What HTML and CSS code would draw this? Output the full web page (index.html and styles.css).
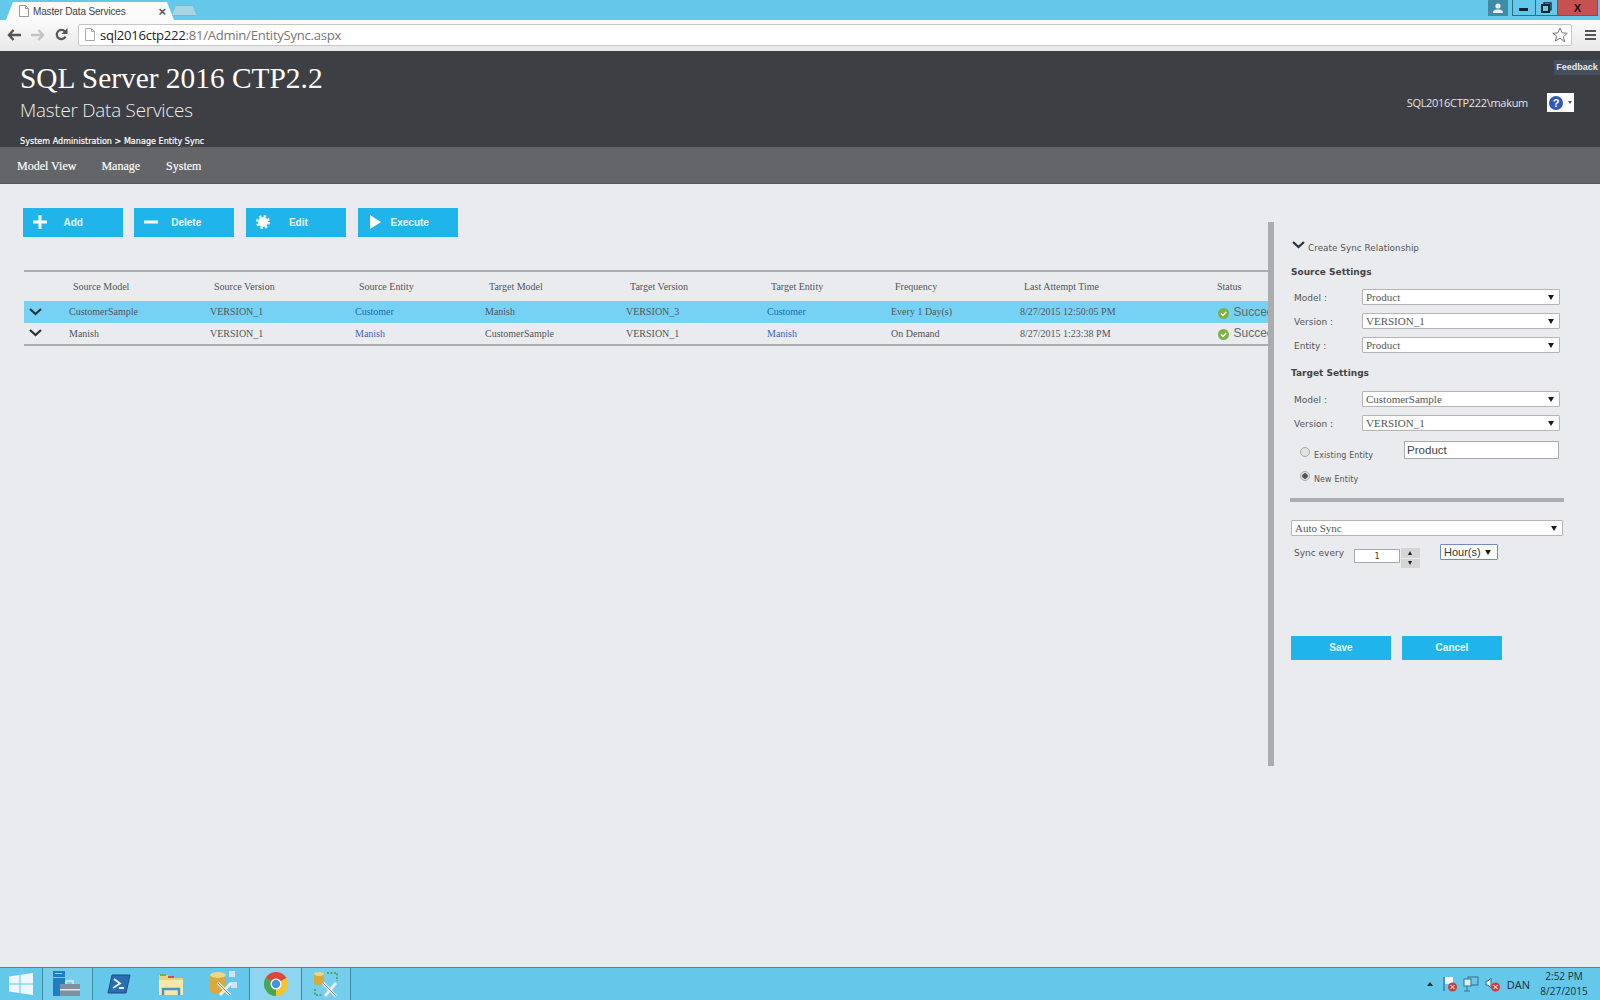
FILE: index.html
```html
<!DOCTYPE html>
<html lang="en">
<head>
<meta charset="utf-8">
<title>Master Data Services</title>
<link rel="stylesheet" href="styles.css">
</head>
<body>
<div class="tabstrip">
  <div class="tab">
    <svg class="tab-doc" width="10" height="12" viewBox="0 0 10 12"><path d="M.5.5h6l3 3v8h-9z" fill="#fff" stroke="#999"/><path d="M6.5.5v3h3" fill="none" stroke="#999"/></svg>
    <span class="tab-title">Master Data Services</span>
    <span class="tab-close">×</span>
  </div>
  <div class="newtab"></div>
  <div class="winctl">
    <div class="win-user"><svg width="12" height="10" viewBox="0 0 12 10"><circle cx="6" cy="3" r="2.6" fill="#e6f3f7"/><path d="M1 10c0-3 2-3.6 5-3.6s5 .6 5 3.6z" fill="#e6f3f7"/></svg></div>
    <div class="win-btns">
      <div class="win-min"><svg width="10" height="4" viewBox="0 0 10 4"><rect y="1" width="9" height="3" fill="#15222a"/></svg></div>
      <div class="win-max"><svg width="11" height="11" viewBox="0 0 11 11"><path d="M3 2.500V.8h7v7H8.200" fill="none" stroke="#15222a" stroke-width="1.300"/><rect x="1" y="3" width="7" height="7" fill="none" stroke="#15222a" stroke-width="2"/></svg></div>
      <div class="win-close"><span>X</span></div>
    </div>
  </div>
</div>
<div class="toolbar">
  <svg class="nav-ico first" width="14" height="12" viewBox="0 0 14 12"><path d="M6.500 1 2 6l4.500 5M2.500 6H14" fill="none" stroke="#555" stroke-width="2.400"/></svg>
  <svg class="nav-ico" width="14" height="12" viewBox="0 0 14 12"><path d="M7.500 1 12 6l-4.500 5M11.500 6H0" fill="none" stroke="#c4c4c4" stroke-width="2.400"/></svg>
  <svg class="nav-ico" width="13" height="13" viewBox="0 0 13 13"><path d="M10.500 8.500a4.600 4.600 0 1 1-.6-5" fill="none" stroke="#555" stroke-width="2.200"/><path d="M12.500 0v6h-6z" fill="#555"/></svg>
  <div class="omnibox">
    <svg class="omni-doc" width="10" height="13" viewBox="0 0 10 13"><path d="M.5.500h6l3 3v9h-9z" fill="#fff" stroke="#aaa"/><path d="M6.500.5v3h3" fill="none" stroke="#aaa"/></svg>
    <span class="url"><span class="url-host">sql2016ctp222</span>:81/Admin/EntitySync.aspx</span>
    <svg class="star" width="16" height="16" viewBox="0 0 16 16"><path d="M8 1l2.100 4.800 5.200.5-3.900 3.400 1.200 5.100L8 11.100 3.400 14l1.200-5.100L.7 6.300l5.200-.5z" fill="#fff" stroke="#777"/></svg>
  </div>
  <div class="hamburger"><i></i><i></i><i></i></div>
</div>
<header class="header">
  <div class="brand">
    <div class="brand-title">SQL Server 2016 CTP2.2</div>
    <div class="brand-sub">Master Data Services</div>
    <div class="crumb">System Administration &gt; Manage Entity Sync</div>
  </div>
  <div class="header-right">
    <div class="feedback">Feedback</div>
    <div class="userline">
      <span class="username">SQL2016CTP222\makum</span>
      <div class="help">
        <span class="help-ico">?</span>
        <span class="help-arrow"></span>
      </div>
    </div>
  </div>
</header>
<nav class="nav">
  <span class="nav-a">Model View</span>
  <span class="nav-b">Manage</span>
  <span class="nav-c">System</span>
</nav>
<main class="main">
  <section class="left">
    <div class="actions">
      <div class="btn"><svg class="btn-ico" width="14" height="14" viewBox="0 0 14 14"><path d="M5.500 0h3v5.500H14v3H8.500V14h-3V8.500H0v-3h5.500z" fill="#fff"/></svg><span class="btn-add">Add</span></div>
      <div class="btn"><svg class="btn-ico" width="14" height="14" viewBox="0 0 14 14"><rect y="5.500" width="14" height="3" fill="#fff"/></svg><span class="btn-del">Delete</span></div>
      <div class="btn"><svg class="btn-ico" width="14" height="14" viewBox="0 0 14 14"><circle cx="7" cy="7" r="5" fill="#fff"/><circle cx="7" cy="7" r="6" fill="none" stroke="#fff" stroke-width="2" stroke-dasharray="2.400 2.310"/></svg><span class="btn-edit">Edit</span></div>
      <div class="btn"><svg class="btn-ico" width="14" height="14" viewBox="0 0 14 14"><path d="M2 0l11 7-11 7z" fill="#fff"/></svg><span class="btn-exec">Execute</span></div>
    </div>
    <table class="grid">
      <thead>
        <tr>
          <th></th><th>Source Model</th><th>Source Version</th><th>Source Entity</th><th>Target Model</th><th>Target Version</th><th>Target Entity</th><th>Frequency</th><th>Last Attempt Time</th><th>Status</th>
        </tr>
      </thead>
      <tbody>
        <tr class="selected">
          <td><svg class="chev" width="13" height="8" viewBox="0 0 13 8"><path d="M1 1l5.500 5L12 1" fill="none" stroke="#2a3038" stroke-width="2.200"/></svg></td>
          <td>CustomerSample</td><td>VERSION_1</td><td class="link">Customer</td><td>Manish</td><td>VERSION_3</td><td class="link">Customer</td><td>Every 1 Day(s)</td><td>8/27/2015 12:50:05 PM</td>
          <td class="status"><svg class="ok" width="11" height="11" viewBox="0 0 11 11"><circle cx="5.500" cy="5.500" r="5.500" fill="#7cb342"/><path d="M3 5.500l2 2 3.200-3.500" fill="none" stroke="#fff" stroke-width="1.500"/></svg><span>Succeeded</span></td>
        </tr>
        <tr>
          <td><svg class="chev" width="13" height="8" viewBox="0 0 13 8"><path d="M1 1l5.500 5L12 1" fill="none" stroke="#2a3038" stroke-width="2.200"/></svg></td>
          <td>Manish</td><td>VERSION_1</td><td class="link">Manish</td><td>CustomerSample</td><td>VERSION_1</td><td class="link">Manish</td><td>On Demand</td><td>8/27/2015 1:23:38 PM</td>
          <td class="status"><svg class="ok" width="11" height="11" viewBox="0 0 11 11"><circle cx="5.500" cy="5.500" r="5.500" fill="#7cb342"/><path d="M3 5.500l2 2 3.200-3.500" fill="none" stroke="#fff" stroke-width="1.500"/></svg><span>Succeeded</span></td>
        </tr>
      </tbody>
    </table>
  </section>
  <div class="splitter"></div>
  <aside class="panel">
    <div class="panel-head"><svg width="13" height="8" viewBox="0 0 13 8"><path d="M1 1l5.500 5L12 1" fill="none" stroke="#2a3038" stroke-width="2.200"/></svg><span>Create Sync Relationship</span></div>
    <h3 class="settings source">Source Settings</h3>
    <div class="field"><label>Model :</label><div class="select"><span>Product</span><i class="arrow"></i></div></div>
    <div class="field"><label>Version :</label><div class="select"><span>VERSION_1</span><i class="arrow"></i></div></div>
    <div class="field"><label>Entity :</label><div class="select"><span>Product</span><i class="arrow"></i></div></div>
    <h3 class="settings target">Target Settings</h3>
    <div class="field"><label>Model :</label><div class="select"><span>CustomerSample</span><i class="arrow"></i></div></div>
    <div class="field"><label>Version :</label><div class="select"><span>VERSION_1</span><i class="arrow"></i></div></div>
    <div class="radio-row first-radio"><i class="radio"></i><span class="radio-label">Existing Entity</span><div class="textbox">Product</div></div>
    <div class="radio-row"><i class="radio on"></i><span class="radio-label">New Entity</span></div>
    <div class="rule"></div>
    <div class="select wide"><span>Auto Sync</span><i class="arrow"></i></div>
    <div class="sync">
      <span class="sync-label">Sync every</span>
      <div class="num">1</div>
      <div class="spin"><div><i class="up"></i></div><div><i class="arrow small"></i></div></div>
      <div class="hours"><span>Hour(s)</span><i class="arrow"></i></div>
    </div>
    <div class="panel-actions">
      <div class="btn plain">Save</div>
      <div class="btn plain">Cancel</div>
    </div>
  </aside>
</main>
<footer class="taskbar">
  <div class="task start"><svg width="24" height="22" viewBox="0 0 24 22"><path d="M0 3.500 10.500 2v8.500H0zM11.500 1.800 24 0v10.500H11.500zM0 11.500h10.500V20L0 18.500zM11.500 11.500H24V22l-12.500-1.800z" fill="#eef8fc"/></svg></div>
  <div class="task t2"><svg width="28" height="28" viewBox="0 0 28 28"><rect x="1" y="1" width="12" height="6" fill="#1c7fc4"/><rect x="1" y="8" width="12" height="18" fill="#1c7fc4"/><rect x="3" y="3" width="7" height="1" fill="#9fd4ef"/><rect x="8" y="14" width="20" height="12" fill="#7f8fa0"/><rect x="8" y="19" width="20" height="1.500" fill="#dfe7ee"/><path d="M14 14v-3h7v3" fill="none" stroke="#dfe7ee" stroke-width="1.500"/></svg></div>
  <div class="task t3"><svg width="24" height="20" viewBox="0 0 24 20"><path d="M5 1h18l-4 18H1z" fill="#2a6db0" stroke="#1b4f86"/><path d="M7 5l6 4.500-7 4.500M12 14h5" fill="none" stroke="#eaf4fb" stroke-width="1.800"/></svg></div>
  <div class="task t4"><svg width="26" height="24" viewBox="0 0 26 24"><path d="M1 3h9l2 3h13v17H1z" fill="#e9d27e"/><rect x="2" y="2" width="6" height="2" fill="#7dab4a"/><rect x="10" y="4" width="6" height="2" fill="#c7544a"/><rect x="1" y="8" width="24" height="15" fill="#f6e9a8"/><path d="M5 23v-6h16v6" fill="none" stroke="#4d93c9" stroke-width="2.500"/></svg></div>
  <div class="task t5"><svg width="28" height="26" viewBox="0 0 28 26"><ellipse cx="9" cy="4" rx="8" ry="3" fill="#f0d67e"/><path d="M1 4v16c0 2 4 3 8 3s8-1 8-3V4c0 2-4 3-8 3S1 6 1 4z" fill="#d9a93c"/><rect x="20" y="0" width="6" height="6" fill="#cfe3f2"/><rect x="22" y="11" width="6" height="6" fill="#cfe3f2"/><path d="M9 12l12 12M22 12 11 24" stroke="#e9edf0" stroke-width="3"/><path d="M9 12l12 12" stroke="#7e8c99" stroke-width="1"/></svg></div>
  <div class="task active"><svg width="24" height="24" viewBox="0 0 24 24"><path d="M12 12 1.600 6A12 12 0 0 1 22.400 6z" fill="#d9483b"/><path d="M12 12 22.400 6A12 12 0 0 1 12 24z" fill="#f4c430"/><path d="M12 12V24A12 12 0 0 1 1.600 6z" fill="#4aa553"/><circle cx="12" cy="12" r="5.500" fill="#fff"/><circle cx="12" cy="12" r="4.200" fill="#4a8fe0"/></svg></div>
  <div class="task t7"><svg width="26" height="26" viewBox="0 0 26 26"><ellipse cx="6" cy="3" rx="5" ry="2" fill="#f0d67e"/><path d="M1 3v9c0 1 2 2 5 2s5-1 5-2V3c0 1-2 2-5 2S1 4 1 3z" fill="#d9a93c"/><path d="M14 2h10v8M2 18v6h8" fill="none" stroke="#3f9a4a" stroke-width="1.500" stroke-dasharray="2 1.500"/><path d="M10 12l13 13M23 12 12 25" stroke="#e9edf0" stroke-width="3"/><path d="M10 12l13 13" stroke="#7e8c99"/></svg></div>
  <div class="tray">
    <i class="tray-up"></i>
    <svg class="tray-ico" width="14" height="16" viewBox="0 0 14 16"><path d="M1 1v14" stroke="#3b6f85" stroke-width="1.200"/><path d="M2 1h8v7H2z" fill="#f2fafd"/><circle cx="9.500" cy="11" r="4.500" fill="#c9423f"/><path d="M7.500 9l4 4M11.500 9l-4 4" stroke="#fff"/></svg>
    <svg class="tray-ico" width="16" height="16" viewBox="0 0 16 16"><rect x="5" y="1" width="10" height="8" fill="none" stroke="#3b6f85"/><rect x="1" y="3" width="7" height="7" fill="#d8eef6" stroke="#3b6f85"/><path d="M4 10v5M1 15h6" stroke="#3b6f85"/></svg>
    <svg class="tray-ico" width="15" height="16" viewBox="0 0 15 16"><path d="M1 5h2l3-3v10l-3-3H1z" fill="#e8f4f8" stroke="#3b6f85"/><circle cx="10.500" cy="11" r="4.500" fill="#c9423f"/><path d="M8.500 9l4 4M12.500 9l-4 4" stroke="#fff"/></svg>
    <span class="lang">DAN</span>
    <div class="clock"><span>2:52 PM</span><span>8/27/2015</span></div>
  </div>
</footer>
</body>
</html>
```
FILE: styles.css
```css
* { box-sizing: border-box; }
html, body { margin: 0; padding: 0; }
body {
  width: 1600px;
  height: 1000px;
  overflow: hidden;
  background: #e9ebee;
  font-family: "Liberation Serif", serif;
  display: flex;
  flex-direction: column;
}

/* browser chrome */
.tabstrip {
  height: 20px;
  flex: none;
  background: #63c8ea;
  display: flex;
  align-items: flex-end;
  position: relative;
}
.tab {
  width: 168px;
  height: 18px;
  margin-left: 6px;
  background: #fbfbfb;
  clip-path: polygon(0 100%, 7px 0, 161px 0, 100% 100%);
  display: flex;
  align-items: center;
  padding: 0 8px 0 13px;
  color: #444;
}
.tab-doc { flex: none; }
.tab-title { margin-left: 4px; font: 10px "Liberation Sans", sans-serif; letter-spacing: -.15px; white-space: nowrap; }
.tab-close { margin-left: auto; font: bold 13px "Liberation Sans", sans-serif; color: #555; }
.newtab {
  width: 25px;
  height: 11px;
  margin: 0 0 4px -2px;
  background: #a9d4e6;
  border: 1px solid #7fb5cc;
  clip-path: polygon(0 100%, 4px 0, 20px 0, 100% 100%);
}
.winctl {
  margin-left: auto;
  align-self: flex-start;
  display: flex;
  padding-right: 2px;
}
.win-user {
  width: 20px;
  height: 16px;
  margin-right: 4px;
  background: #3d8ba5;
  display: flex;
  align-items: center;
  justify-content: center;
}
.win-btns { display: flex; height: 16px; border: 1px solid #2c6f87; border-top: 0; }
.win-min, .win-max { display: flex; align-items: center; justify-content: center; border-right: 1px solid #2c6f87; }
.win-min { width: 23px; padding-top: 2px; }
.win-max { width: 22px; }
.win-close {
  width: 39px;
  background: #c75050;
  display: flex;
  align-items: center;
  justify-content: center;
  font: bold 11px "Liberation Sans", sans-serif;
  color: #20130f;
}
.toolbar {
  height: 31px;
  flex: none;
  background: linear-gradient(#fbfbfb, #e8e8e8);
  display: flex;
  align-items: center;
  gap: 10px;
  padding-bottom: 2px;
}
.nav-ico.first { margin-left: 7px; }
.omnibox {
  width: 1494px;
  height: 22px;
  background: #fff;
  border: 1px solid #c6c6c6;
  border-radius: 2px;
  display: flex;
  align-items: center;
  padding-left: 6px;
  padding-right: 3px;
}
.url { margin-left: 5px; font: 13.100px "Open Sans", sans-serif; color: #777; letter-spacing: -.02em; }
.url-host { color: #222; }
.star { margin-left: auto; }
.hamburger { width: 11px; margin-left: 3px; display: flex; flex-direction: column; gap: 2px; }
.hamburger i { display: block; height: 2px; background: #555; }

/* header */
.header {
  height: 96px;
  flex: none;
  background: #3d3f44;
  display: flex;
  justify-content: space-between;
  padding-left: 20px;
  color: #fff;
}
.brand-title { margin-top: 9px; font-size: 29.400px; line-height: 36px; }
.brand-sub { margin-top: 1px; font: 300 18.800px/26px "Open Sans", sans-serif; color: #eee; letter-spacing: -.2px; }
.crumb { margin-top: 14px; font: 8px/10px "DejaVu Sans", sans-serif; letter-spacing: .05px; -webkit-text-stroke: .2px #fff; }
.header-right { display: flex; flex-direction: column; align-items: flex-end; }
.feedback {
  margin-top: 9px;
  width: 46px;
  height: 15px;
  background: #44505e;
  font: bold 9px/15px "Liberation Sans", sans-serif;
  text-align: center;
  color: #e8e8e8;
}
.userline { margin-top: 18px; margin-right: 26px; display: flex; align-items: center; gap: 19px; }
.username { font: 11px "Open Sans", sans-serif; color: #e4e4e4; letter-spacing: -.3px; }
.help {
  width: 27px;
  height: 19px;
  background: #fbfbfb;
  display: flex;
  align-items: center;
}
.help-ico {
  width: 14px;
  height: 14px;
  margin-left: 2px;
  border-radius: 50%;
  background: #2f58b4;
  color: #fff;
  font: bold 11px/14px "Liberation Sans", sans-serif;
  text-align: center;
}
.help-arrow {
  margin-left: 5px;
  border-left: 2.500px solid transparent;
  border-right: 2.500px solid transparent;
  border-top: 3px solid #555;
}

/* nav */
.nav {
  height: 37px;
  flex: none;
  background: #636569;
  border-bottom: 1px solid #55575a;
  display: flex;
  align-items: center;
  padding: 2px 0 0 17px;
  font-size: 12px;
  color: #fff;
  -webkit-text-stroke: .15px #fff;
}
.nav-b { margin-left: 25px; }
.nav-c { margin-left: 26px; }

/* main */
.main { flex: 1; display: flex; min-height: 0; }
.left { width: 1268px; flex: none; padding-left: 22.5px; overflow: hidden; }
.actions { display: flex; gap: 11.700px; margin-top: 24px; }
.btn {
  width: 100px;
  height: 28.500px;
  background: #1fb5ea;
  display: flex;
  align-items: center;
  font: bold 10px "Liberation Sans", sans-serif;
  color: #eaf8fe;
}
.btn-ico { margin-left: 10px; flex: none; }
.btn-add { margin-left: 17px; }
.btn-del { margin-left: 13px; }
.btn-edit { margin-left: 19px; }
.btn-exec { margin-left: 9px; }
.grid {
  width: 1243.500px;
  margin: 33px 0 0 1.500px;
  border-collapse: collapse;
  table-layout: fixed;
  border-top: 2px solid #aaacae;
  border-bottom: 2px solid #aaacae;
  font-size: 10px;
  color: #555;
}
.grid th {
  height: 30px;
  padding: 0 0 0 4px;
  font-weight: 400;
  text-align: left;
  white-space: nowrap;
}
.grid td { height: 22px; padding: 0; white-space: nowrap; overflow: hidden; }
.grid th:nth-child(1), .grid td:nth-child(1) { width: 45px; }
.grid th:nth-child(2), .grid td:nth-child(2) { width: 141px; }
.grid th:nth-child(3), .grid td:nth-child(3) { width: 145px; }
.grid th:nth-child(4), .grid td:nth-child(4) { width: 130px; }
.grid th:nth-child(5), .grid td:nth-child(5) { width: 141px; }
.grid th:nth-child(6), .grid td:nth-child(6) { width: 141px; }
.grid th:nth-child(7), .grid td:nth-child(7) { width: 124px; }
.grid th:nth-child(8), .grid td:nth-child(8) { width: 129px; }
.grid th:nth-child(9), .grid td:nth-child(9) { width: 193px; }
.selected td { background: #76d2f4; }
.link { color: #3a68b8; }
.selected .link { color: #1a6ab8; }
.chev { display: block; margin-left: 5px; }
.grid td.status { padding-left: 5px; font: 12px "Liberation Sans", sans-serif; color: #666; }
.status .ok { vertical-align: -3px; margin-right: 4.500px; }
.splitter { width: 6px; flex: none; height: 544px; margin-top: 38px; background: #aaacae; }

/* side panel */
.panel { flex: 1; padding-left: 17px; font-family: "DejaVu Sans", sans-serif; font-size: 9px; color: #555; }
.panel-head { margin-top: 57px; height: 12px; display: flex; align-items: center; gap: 3px; }
.panel-head svg { margin-top: -4px; margin-left: 1px; }
.panel-head span { margin-top: 2px; font-size: 8.900px; }
.settings { margin: 0; font-size: 9px; line-height: 12px; font-weight: 700; color: #444; }
.source { margin-top: 13px; margin-bottom: 11px; }
.target { margin-top: 14px; margin-bottom: 12px; }
.field { display: flex; align-items: center; height: 16px; margin-bottom: 8px; padding-left: 3px; }
.field label { width: 68px; margin-top: 2px; }
.select {
  width: 198px;
  height: 16px;
  background: #fff;
  border: 1px solid #b5b5b5;
  border-radius: 1px;
  display: flex;
  align-items: center;
  justify-content: space-between;
  padding: 0 5px 0 3px;
  font: 11px "Liberation Serif", serif;
  color: #555;
}
.arrow {
  display: block;
  border-left: 3px solid transparent;
  border-right: 3px solid transparent;
  border-top: 5px solid #1c1c1c;
}
.arrow.small { border-left-width: 2.500px; border-right-width: 2.500px; border-top-width: 4px; }
.up {
  display: block;
  border-left: 2.500px solid transparent;
  border-right: 2.500px solid transparent;
  border-bottom: 4px solid #1c1c1c;
}
.radio-row { display: flex; align-items: center; height: 18px; padding-left: 9px; }
.first-radio { margin-top: 13px; }
.radio-row + .radio-row { margin-top: 6px; }
.radio {
  width: 10px;
  height: 10px;
  margin-top: -3px;
  border: 1px solid #aaa;
  border-radius: 50%;
  background: #e2e2e2;
}
.radio.on { background: radial-gradient(circle, #555 0 2.500px, #e6e6e6 3px); }
.radio-label { margin-left: 4px; margin-top: 4px; font-size: 8px; letter-spacing: .1px; }
.textbox {
  width: 155px;
  height: 18px;
  margin-left: 31px;
  margin-top: -6px;
  background: #fff;
  border: 1px solid #aaa;
  padding-left: 2px;
  font: 11.500px/16px "Liberation Sans", sans-serif;
  color: #444;
}
.rule { width: 274px; height: 4px; margin: 12px 0 0 -1px; background: #aaacae; }
.select.wide { width: 272px; margin-top: 18px; }
.sync { display: flex; align-items: flex-start; height: 33px; padding-left: 3px; }
.sync-label { margin-top: 12px; }
.num {
  width: 46px;
  height: 14px;
  margin: 13px 0 0 10px;
  background: #fff;
  border: 1px solid #aaa;
  font: 8px/13px "DejaVu Sans Mono", monospace;
  text-align: center;
  color: #333;
}
.spin { width: 19px; margin: 12px 0 0 1px; display: flex; flex-direction: column; gap: 1px; }
.spin div { height: 9.500px; background: #d5d5d5; display: flex; align-items: center; justify-content: center; }
.hours {
  width: 58px;
  height: 16px;
  margin: 8px 0 0 20px;
  background: #fff;
  border: 1px solid #6d8dc4;
  border-radius: 1px;
  display: flex;
  align-items: center;
  justify-content: space-between;
  padding: 0 6px 0 3px;
  font: 11px "Liberation Sans", sans-serif;
  color: #333;
}
.panel-actions { display: flex; gap: 11px; margin-top: 67px; }
.btn.plain { height: 23.500px; justify-content: center; }

/* taskbar */
.taskbar {
  height: 33px;
  flex: none;
  background: #63c8ea;
  border-top: 1px solid #3d8ba5;
  display: flex;
  align-items: stretch;
}
.task {
  display: flex;
  align-items: center;
  justify-content: center;
  border-right: 1px solid #3d8ba5;
}
.start { width: 43px; }
.t2 { width: 50px; padding-right: 4px; background: rgba(255,255,255,.12); }
.t3, .t4 { border-right: 0; width: 52px; }
.t5 { width: 53px; }
.active { width: 52px; background: #8ed6f0; }
.t7 { width: 49px; background: rgba(255,255,255,.12); }
.tray { margin-left: auto; display: flex; align-items: center; padding-right: 11px; font: 11.500px "Open Sans", sans-serif; color: #1d2f38; }
.tray-up {
  margin-right: 10px;
  border-left: 3px solid transparent;
  border-right: 3px solid transparent;
  border-bottom: 4px solid #1d2f38;
}
.tray-ico { margin-right: 6px; }
.tray-ico:last-of-type { margin-right: 7px; }
.lang { margin: 0 9px 0 0; font-size: 11px; }
.clock { display: flex; flex-direction: column; align-items: center; width: 50px; font-size: 10px; line-height: 15px; }
```
